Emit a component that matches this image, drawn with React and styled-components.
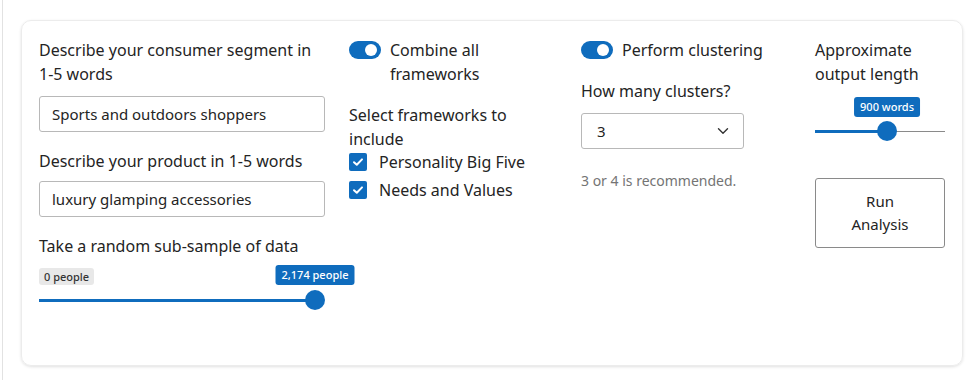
import React from 'react'
import styled, { createGlobalStyle } from 'styled-components'

const Global = createGlobalStyle`
  html, body { margin: 0; padding: 0; background: #fff; }
  body { font-family: "Noto Sans", "Open Sans", sans-serif; color: #242424; font-size: 16px; }
`

const Page = styled.div`
  width: 980px;
  height: 380px;
  box-sizing: border-box;
  padding: 20px 0 0 21px;
  position: relative;
  &::before {
    content: '';
    position: absolute;
    left: 2px;
    top: 0;
    bottom: 0;
    border-left: 1px solid #e2e2e2;
  }
`

const Card = styled.div`
  width: 942px;
  height: 346px;
  box-sizing: border-box;
  border: 1px solid #ececec;
  border-radius: 10px;
  box-shadow: 0 1px 3px rgba(0, 0, 0, 0.12);
  padding: 17px 17px;
  display: grid;
  grid-template-columns: 286px 208px 210px 130px;
  column-gap: 24px;
  align-items: start;
`

const Column = styled.div`
  display: flex;
  flex-direction: column;
`

const Label = styled.div`
  font-size: 16px;
  line-height: 24px;
  margin-bottom: ${p => p.$mb || 0}px;
`

const TextInput = styled.div`
  height: 36px;
  box-sizing: border-box;
  border: 1px solid #b8b8b8;
  border-radius: 3px;
  padding: 0 12px;
  display: flex;
  align-items: center;
  font-size: 15px;
  margin-bottom: ${p => p.$mb || 0}px;
`

const ToggleRow = styled.div`
  display: flex;
  align-items: flex-start;
  gap: 9px;
  margin-bottom: ${p => p.$mb || 0}px;
`

const Toggle = styled.span`
  flex: none;
  width: 32px;
  height: 18px;
  margin-top: 3px;
  border-radius: 9px;
  background: #0f6cbd;
  position: relative;
  &::after {
    content: '';
    position: absolute;
    right: 4px;
    top: 3px;
    width: 12px;
    height: 12px;
    border-radius: 50%;
    background: #fff;
  }
`

const CheckList = styled.div`
  display: flex;
  flex-direction: column;
  margin-top: -3px;
`

const CheckRow = styled.div`
  display: flex;
  align-items: center;
  gap: 12px;
  height: 28px;
`

const Box = styled.span`
  width: 18px;
  height: 18px;
  border-radius: 2px;
  background: #0f6cbd;
  display: flex;
  align-items: center;
  justify-content: center;
`

const Select = styled.div`
  height: 36px;
  width: 163px;
  box-sizing: border-box;
  border: 1px solid #b8b8b8;
  border-radius: 3px;
  padding: 0 14px 0 15px;
  display: flex;
  align-items: center;
  justify-content: space-between;
  font-size: 15px;
  margin-bottom: 22px;
`

const Hint = styled.div`
  font-size: 14px;
  color: #747474;
`

const SliderWrap = styled.div`
  position: relative;
  height: ${p => p.$h}px;
`

const Track = styled.div`
  position: absolute;
  left: 0;
  right: ${p => p.$right || 0}px;
  bottom: ${p => p.$bottom}px;
  height: ${p => (p.$thin ? 1.5 : 2)}px;
  background: #8a8a8a;
`

const Fill = styled.div`
  position: absolute;
  left: 0;
  top: -0.5px;
  height: 3px;
  background: #0f6cbd;
`

const Thumb = styled.div`
  position: absolute;
  top: 50%;
  width: 20px;
  height: 20px;
  margin: -10px 0 0 -10px;
  border-radius: 50%;
  background: #0f6cbd;
`

const Badge = styled.div`
  position: absolute;
  font-size: 11px;
  font-weight: 500;
  line-height: ${p => (p.$blue ? 20 : 17)}px;
  padding: 0 ${p => (p.$blue ? 6 : 5)}px;
  border-radius: 3px;
  white-space: nowrap;
  background: ${p => (p.$blue ? '#0f6cbd' : '#e8e8e8')};
  color: ${p => (p.$blue ? '#fff' : '#333')};
  top: ${p => p.$top}px;
  left: ${p => p.$left};
  transform: ${p => (p.$center ? 'translateX(-50%)' : 'none')};
`

const RunButton = styled.button`
  width: 130px;
  height: 70px;
  margin-top: 37px;
  box-sizing: border-box;
  background: #fff;
  border: 1px solid #8a8a8a;
  border-radius: 3px;
  font-family: inherit;
  font-size: 15px;
  line-height: 23px;
  color: #242424;
  text-align: center;
`

const Check = () => (
  <svg width="12" height="10" viewBox="0 0 12 10">
    <path d="M2 5.2 L4.8 7.8 L10 2.4" fill="none" stroke="#fff" strokeWidth="2" strokeLinecap="round" strokeLinejoin="round" />
  </svg>
)

const Chevron = () => (
  <svg width="12" height="8" viewBox="0 0 12 8">
    <path d="M1.5 1.8 L6 6.2 L10.5 1.8" fill="none" stroke="#333" strokeWidth="1.4" strokeLinecap="round" strokeLinejoin="round" />
  </svg>
)

const App = () => {
  const sample = { value: 2174, max: 2174 }
  const samplePct = (sample.value / sample.max) * 100
  const words = { pct: 55.4 }
  const frameworks = ['Personality Big Five', 'Needs and Values']
  return (
    <Page>
      <Global />
      <Card>
        <Column>
          <Label $mb={10}>Describe your consumer segment in<br />1-5 words</Label>
          <TextInput $mb={17}>Sports and outdoors shoppers</TextInput>
          <Label $mb={8}>Describe your product in 1-5 words</Label>
          <TextInput $mb={17}>luxury glamping accessories</TextInput>
          <Label>Take a random sub-sample of data</Label>
          <SliderWrap $h={62}>
            <Badge $top={10} $left="0">0 people</Badge>
            <Track $bottom={19} $right={10}>
              <Fill style={{ width: `${samplePct}%` }} />
              <Thumb style={{ left: `${samplePct}%` }} />
              <Badge $blue $center $top={-34} $left={`${samplePct}%`}>2,174 people</Badge>
            </Track>
          </SliderWrap>
        </Column>

        <Column>
          <ToggleRow $mb={17}>
            <Toggle />
            <Label>Combine all<br />frameworks</Label>
          </ToggleRow>
          <Label>Select frameworks to<br />include</Label>
          <CheckList>
            {frameworks.map(f => (
              <CheckRow key={f}><Box><Check /></Box>{f}</CheckRow>
            ))}
          </CheckList>
        </Column>

        <Column>
          <ToggleRow $mb={17}>
            <Toggle />
            <Label>Perform clustering</Label>
          </ToggleRow>
          <Label $mb={10}>How many clusters?</Label>
          <Select>3<Chevron /></Select>
          <Hint>3 or 4 is recommended.</Hint>
        </Column>

        <Column>
          <Label>Approximate<br />output length</Label>
          <SliderWrap $h={55}>
            <Track $bottom={9} $thin>
              <Fill style={{ width: `${words.pct}%` }} />
              <Thumb style={{ left: `${words.pct}%` }} />
              <Badge $blue $center $top={-34} $left={`${words.pct}%`}>900 words</Badge>
            </Track>
          </SliderWrap>
          <RunButton>Run<br />Analysis</RunButton>
        </Column>
      </Card>
    </Page>
  )
}

export default App
